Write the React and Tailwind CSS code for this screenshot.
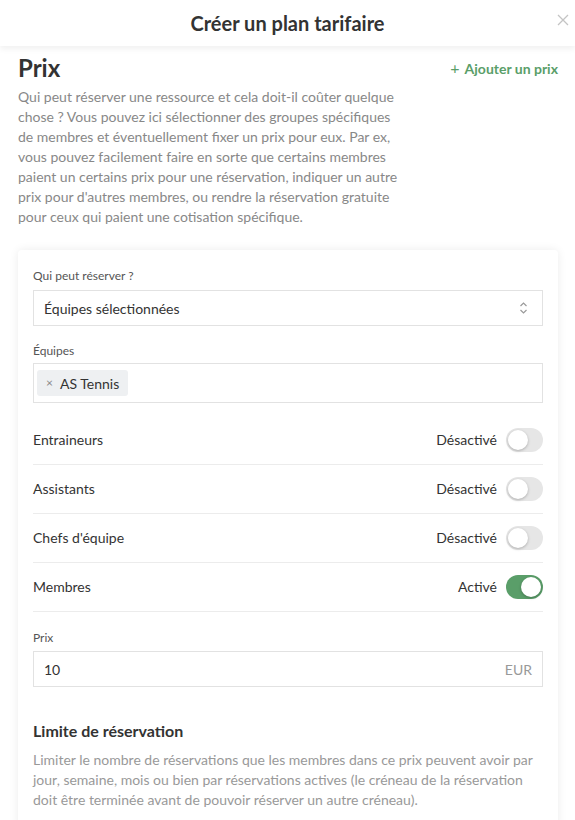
import React from 'react'

const rows = [
    { name: 'Entraineurs', on: false },
    { name: 'Assistants', on: false },
    { name: "Chefs d'équipe", on: false },
    { name: 'Membres', on: true },
]

const Toggle = ({ on }) => (
    <div
        className={
            'relative h-[24px] w-[37px] rounded-full ' + (on ? 'bg-[#5a9e69]' : 'bg-[#e6e6e6]')
        }
    >
        <div
            className={
                'absolute top-[2px] h-[20px] w-[20px] rounded-full bg-white shadow-[0_1px_3px_rgba(0,0,0,0.25)] ' +
                (on ? 'left-[15px]' : 'left-[2px]')
            }
        />
    </div>
)

const App = () => {
    return (
        <div className="h-[820px] w-[575px] overflow-hidden bg-white font-['Lato','Liberation_Sans',sans-serif] text-[#333]">
            {/* modal header */}
            <div className="relative z-10 flex h-[46px] items-center justify-center bg-white shadow-[0_3px_6px_rgba(0,0,0,0.06)]">
                <h2 className="text-[20px] font-bold text-[#333]">Créer un plan tarifaire</h2>
                <svg
                    className="absolute right-[6px] top-[14px]"
                    width="12"
                    height="12"
                    viewBox="0 0 12 12"
                    stroke="#c4c4c4"
                    strokeWidth="1.3"
                >
                    <path d="M1 1l10 10M11 1L1 11" />
                </svg>
            </div>

            <div className="pl-[18px] pr-[17px]">
                <div className="flex items-center justify-between pt-[7px]">
                    <h1 className="text-[24px] font-bold leading-[30px]">Prix</h1>
                    <button className="flex items-center gap-[5px] text-[14px] font-bold text-[#5a9e69]">
                        <span className="text-[16px] font-normal">+</span>
                        Ajouter un prix
                    </button>
                </div>
                <p className="mt-[4px] w-[382px] text-[14px] leading-[20px] text-[#888]">
                    Qui peut réserver une ressource et cela doit-il coûter quelque chose ? Vous pouvez ici
                    sélectionner des groupes spécifiques de membres et éventuellement fixer un prix pour eux.
                    Par ex, vous pouvez facilement faire en sorte que certains membres paient un certains prix
                    pour une réservation, indiquer un autre prix pour d'autres membres, ou rendre la
                    réservation gratuite pour ceux qui paient une cotisation spécifique.
                </p>

                {/* price card */}
                <div className="mt-[23px] rounded-[4px] bg-white px-[15px] pb-[20px] pt-[18px] shadow-[0_0_10px_rgba(0,0,0,0.08)]">
                    <label className="block text-[12px] leading-[16px] text-[#555]">Qui peut réserver ?</label>
                    <div className="mt-[6px] flex h-[36px] items-center justify-between border border-[#e2e2e2] pl-[10px] pr-[14px] text-[14px]">
                        <span>Équipes sélectionnées</span>
                        <svg width="9" height="14" viewBox="0 0 9 14" fill="none" stroke="#9a9a9a" strokeWidth="1.2">
                            <path d="M1.5 5L4.5 2l3 3M1.5 9l3 3 3-3" />
                        </svg>
                    </div>

                    <label className="mt-[17px] block text-[12px] leading-[16px] text-[#555]">Équipes</label>
                    <div className="mt-[4px] flex h-[40px] items-center border border-[#e2e2e2] px-[3px]">
                        <span className="flex h-[26px] items-center gap-[7px] rounded-[3px] bg-[#eef0f2] px-[9px] text-[14px]">
                            <span className="text-[12px] text-[#888]">×</span>
                            AS Tennis
                        </span>
                    </div>

                    <div className="mt-[13px]">
                        {rows.map((r) => (
                            <div
                                key={r.name}
                                className="flex h-[49px] items-center justify-between border-b border-[#ececec] pb-px text-[14px]"
                            >
                                <span>{r.name}</span>
                                <div className="flex items-center gap-[9px]">
                                    <span>{r.on ? 'Activé' : 'Désactivé'}</span>
                                    <Toggle on={r.on} />
                                </div>
                            </div>
                        ))}
                    </div>

                    <label className="mt-[18px] block text-[12px] leading-[16px] text-[#555]">Prix</label>
                    <div className="mt-[5px] flex h-[36px] items-center justify-between border border-[#e2e2e2] pl-[10px] pr-[10px] text-[14px]">
                        <span>10</span>
                        <span className="text-[#999]">EUR</span>
                    </div>

                    <h3 className="mt-[32px] text-[16px] font-bold leading-[24px]">Limite de réservation</h3>
                    <p className="mt-[7px] text-[14px] leading-[20px] text-[#999]">
                        Limiter le nombre de réservations que les membres dans ce prix peuvent avoir par jour,
                        semaine, mois ou bien par réservations actives (le créneau de la réservation doit être
                        terminée avant de pouvoir réserver un autre créneau).
                    </p>
                </div>
            </div>
        </div>
    )
}

export default App
